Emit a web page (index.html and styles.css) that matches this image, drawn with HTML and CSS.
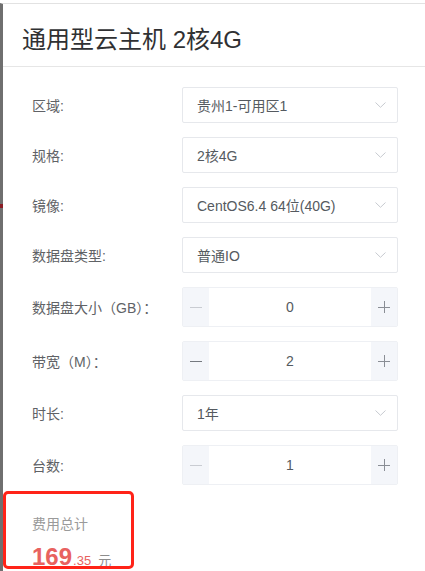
FILE: index.html
```html
<!DOCTYPE html>
<html lang="zh-CN">
<head>
<meta charset="utf-8">
<title>通用型云主机 2核4G</title>
<link rel="stylesheet" href="styles.css">
</head>
<body>
<div class="frame">
  <header class="head"><h1 class="title">通用型云主机 2核4G</h1></header>
  <div class="form">
    <div class="row">
      <span class="label">区域:</span>
      <div class="select"><span>贵州1-可用区1</span><svg class="chev" width="11" height="6" viewBox="0 0 11 6"><path d="M0.5 0.5 L5.5 5.3 L10.5 0.5" /></svg></div>
    </div>
    <div class="row">
      <span class="label">规格:</span>
      <div class="select"><span>2核4G</span><svg class="chev" width="11" height="6" viewBox="0 0 11 6"><path d="M0.5 0.5 L5.5 5.3 L10.5 0.5" /></svg></div>
    </div>
    <div class="row">
      <span class="label">镜像:</span>
      <div class="select"><span>CentOS6.4 64位(40G)</span><svg class="chev" width="11" height="6" viewBox="0 0 11 6"><path d="M0.5 0.5 L5.5 5.3 L10.5 0.5" /></svg></div>
    </div>
    <div class="row">
      <span class="label">数据盘类型:</span>
      <div class="select"><span>普通IO</span><svg class="chev" width="11" height="6" viewBox="0 0 11 6"><path d="M0.5 0.5 L5.5 5.3 L10.5 0.5" /></svg></div>
    </div>
    <div class="row">
      <span class="label">数据盘大小（GB）：</span>
      <div class="stepper">
        <span class="btn off"><svg width="12" height="12" viewBox="0 0 12 12"><path d="M0 6.5 H12" /></svg></span>
        <span class="value">0</span>
        <span class="btn"><svg width="12" height="12" viewBox="0 0 12 12"><path d="M0 6.5 H12 M6.5 0 V12" /></svg></span>
      </div>
    </div>
    <div class="row">
      <span class="label">带宽（M）：</span>
      <div class="stepper">
        <span class="btn on"><svg width="12" height="12" viewBox="0 0 12 12"><path d="M0 6.5 H12" /></svg></span>
        <span class="value">2</span>
        <span class="btn"><svg width="12" height="12" viewBox="0 0 12 12"><path d="M0 6.5 H12 M6.5 0 V12" /></svg></span>
      </div>
    </div>
    <div class="row">
      <span class="label">时长:</span>
      <div class="select"><span>1年</span><svg class="chev" width="11" height="6" viewBox="0 0 11 6"><path d="M0.5 0.5 L5.5 5.3 L10.5 0.5" /></svg></div>
    </div>
    <div class="row">
      <span class="label">台数:</span>
      <div class="stepper">
        <span class="btn off"><svg width="12" height="12" viewBox="0 0 12 12"><path d="M0 6.5 H12" /></svg></span>
        <span class="value">1</span>
        <span class="btn"><svg width="12" height="12" viewBox="0 0 12 12"><path d="M0 6.5 H12 M6.5 0 V12" /></svg></span>
      </div>
    </div>
  </div>
  <div class="summary">
    <div class="sum-label">费用总计</div>
    <div class="price"><span class="int">169</span><span class="dec">.35</span><span class="unit">元</span></div>
  </div>
  <span class="mark"></span>
  <span class="highlight"></span>
</div>
</body>
</html>
```
FILE: styles.css
```css
html, body {
  margin: 0;
  padding: 0;
  background: #ffffff;
  height: 571px;
  overflow: hidden;
}
body {
  font-family: "Liberation Sans", "Noto Sans CJK SC", sans-serif;
  color: #606266;
}
.frame {
  position: relative;
  margin-top: 3px;
  height: 568px;
  border-top: 1px solid #e2e2e2;
  border-left: 3px solid #6f6f6f;
  box-sizing: border-box;
}
.head {
  height: 63px;
  box-sizing: border-box;
  padding: 20px 0 0 19px;
  border-bottom: 1px solid #e6e6e6;
}
.title {
  margin: 0;
  font-size: 24px;
  line-height: 32px;
  font-weight: normal;
  color: #303133;
}
.form {
  padding: 20px 0 0 29px;
  display: flex;
  flex-direction: column;
  gap: 14px;
}
.row {
  display: grid;
  grid-template-columns: 150px 216px;
  align-items: center;
}
.label {
  font-size: 14px;
  color: #606266;
  white-space: nowrap;
}
.select {
  height: 36px;
  box-sizing: border-box;
  border: 1px solid #e6e8ec;
  border-radius: 2px;
  display: flex;
  align-items: center;
  justify-content: space-between;
  padding: 0 11px 0 14px;
  font-size: 14px;
  color: #555a60;
}
.chev path {
  fill: none;
  stroke: #c7cad0;
  stroke-width: 1;
}
.stepper {
  height: 40px;
  box-sizing: border-box;
  border: 1px solid #eef0f4;
  border-radius: 2px;
  display: grid;
  grid-template-columns: 26px 1fr 26px;
  font-size: 14px;
  color: #555a60;
}
.btn {
  background: #f4f6fa;
  display: flex;
  align-items: center;
  justify-content: center;
}
.btn path {
  fill: none;
  stroke: #8a8e95;
  stroke-width: 1;
}
.btn.off path {
  stroke: #c9ccd2;
}
.btn.on path {
  stroke: #75797f;
}
.value {
  display: flex;
  align-items: center;
  justify-content: center;
  background: #ffffff;
}
.summary {
  padding: 29px 0 0 29px;
}
.sum-label {
  font-size: 14px;
  line-height: 20px;
  color: #9a9a9a;
}
.price {
  margin-top: 9px;
  line-height: 28px;
  white-space: nowrap;
}
.int {
  font-size: 24px;
  font-weight: bold;
  color: #e8625f;
}
.dec {
  font-size: 13px;
  color: #e8625f;
  margin-left: 1px;
}
.unit {
  font-size: 13px;
  color: #8d8d8d;
  margin-left: 7px;
}
.mark {
  position: absolute;
  left: -3px;
  top: 200px;
  width: 3px;
  height: 4px;
  background: #8a1c24;
}
.highlight {
  position: absolute;
  left: 0;
  top: 487px;
  width: 131px;
  height: 78px;
  box-sizing: border-box;
  border: 3px solid #ff2318;
  border-radius: 5px;
}
```
